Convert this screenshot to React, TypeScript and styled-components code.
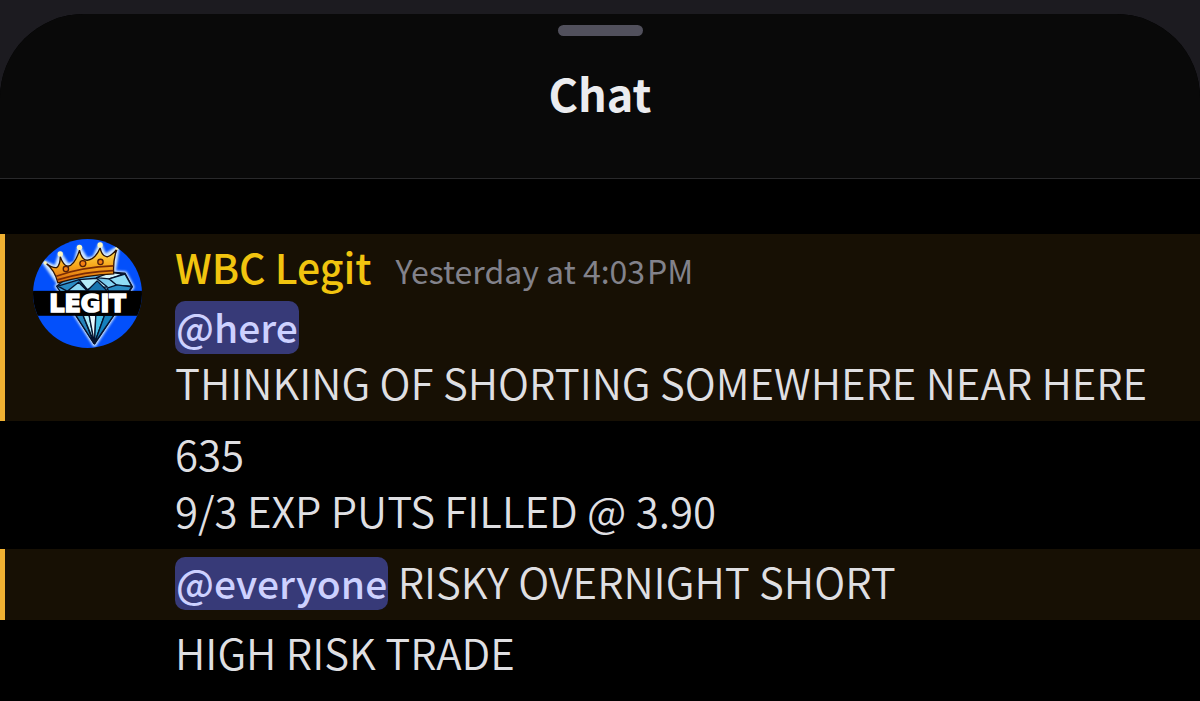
import styled, { createGlobalStyle } from 'styled-components';

const messages = [
  {
    id: 1,
    author: 'WBC Legit',
    time: 'Yesterday at 4:03\u200aPM',
    highlighted: true,
    lines: [
      { mention: '@here', text: '' },
      { mention: '', text: 'THINKING OF SHORTING SOMEWHERE NEAR HERE' },
    ],
  },
  {
    id: 2,
    highlighted: false,
    lines: [
      { mention: '', text: '635' },
      { mention: '', text: '9/3 EXP PUTS FILLED @ 3.90' },
    ],
  },
  {
    id: 3,
    highlighted: true,
    lines: [{ mention: '@everyone', text: ' RISKY OVERNIGHT SHORT' }],
  },
  {
    id: 4,
    highlighted: false,
    lines: [{ mention: '', text: 'HIGH RISK TRADE' }],
  },
];

function LegitAvatar() {
  return (
    <Avatar viewBox="99 42 328 328" role="img" aria-label="WBC Legit">
      <defs>
        <clipPath id="round">
          <circle cx="263" cy="206" r="164" />
        </clipPath>
        <linearGradient id="gold" x1="0" y1="0" x2="0" y2="1">
          <stop offset="0" stopColor="#ffe45a" />
          <stop offset="0.5" stopColor="#f8a81c" />
          <stop offset="1" stopColor="#d9660c" />
        </linearGradient>
        <linearGradient id="ice" x1="0" y1="0" x2="1" y2="1">
          <stop offset="0" stopColor="#2f8fd0" />
          <stop offset="0.5" stopColor="#8fdcf5" />
          <stop offset="1" stopColor="#2a9bd8" />
        </linearGradient>
        <filter id="glow" x="-20%" y="-20%" width="140%" height="140%">
          <feGaussianBlur stdDeviation="4" />
        </filter>
      </defs>
      <g clipPath="url(#round)">
        <rect x="99" y="42" width="328" height="328" fill="#0350fb" />
        <g
          filter="url(#glow)"
          fill="#cfe6ff"
          stroke="#cfe6ff"
          strokeWidth="12"
          strokeLinejoin="round"
        >
          <path d="M170 184 L200 160 L335 142 L376 145 L398 186 L342 272 L284 360 L228 272 Z" />
          <path d="M174 172 L133 112 L168 129 L181 88 L203 122 L227 114 L238 68 L259 104 L283 99 L301 60 L315 94 L353 70 L341 148 Z" />
        </g>
        <g stroke="#05122e" strokeWidth="4" strokeLinejoin="round">
          <path fill="url(#ice)" d="M170 184 L200 160 L335 142 L376 145 L398 186 L342 272 L284 358 L228 272 Z" />
          <path fill="#2a8cc4" d="M174 184 L238 164 L262 198 L200 198 Z" />
          <path fill="#b5ecfb" d="M238 164 L290 160 L322 186 L262 194 Z" />
          <path fill="#8ad6f2" d="M204 198 L236 172 L262 198 Z" />
          <path fill="#1874b0" d="M262 198 L292 168 L322 198 Z" />
          <path fill="#d4f5fd" d="M290 158 L335 142 L372 148 L328 162 Z" />
          <path fill="#8fdcf5" d="M328 162 L376 148 L396 184 L352 182 Z" />
          <path fill="#2a8cc4" d="M322 190 L352 180 L396 186 L388 198 L326 198 Z" />
          <path fill="#2582ba" d="M228 272 L250 272 L282 356 Z" />
          <path fill="#a8e9f8" d="M250 272 L268 272 L284 356 Z" />
          <path fill="#eafaff" d="M268 272 L288 272 L284 356 Z" />
          <path fill="#49bee6" d="M288 272 L314 272 L284 356 Z" />
          <path fill="#1480bd" d="M314 272 L342 272 L284 356 Z" />
        </g>
        <path
          fill="url(#gold)"
          stroke="#2b1203"
          strokeWidth="4"
          strokeLinejoin="round"
          d="M174 174 Q164 134 137 114 Q158 130 170 128 Q181 122 181 95 Q190 122 204 124 Q224 122 239 76 Q246 106 262 106 Q286 104 301 69 Q306 94 322 96 Q336 92 352 72 Q339 104 342 147 Q258 150 174 174 Z"
        />
        <path
          fill="none"
          stroke="#7b2b04"
          strokeWidth="5"
          d="M169 154 Q248 126 341 123 M172 165 Q254 140 341 137"
        />
        <g fill="#f57f12" stroke="#52200a" strokeWidth="4">
          <circle cx="198" cy="132" r="8" />
          <circle cx="249" cy="116" r="9" />
          <circle cx="302" cy="111" r="8" />
        </g>
        <g fill="#fff8bd">
          <circle cx="136" cy="114" r="5" />
          <circle cx="181" cy="87" r="8" />
          <circle cx="239" cy="67" r="8" />
          <circle cx="301" cy="60" r="8" />
          <circle cx="352" cy="70" r="5" />
        </g>
        <rect x="99" y="198" width="328" height="75" fill="#000" />
        <AvatarText x="263" y="261" textAnchor="middle">
          LEGIT
        </AvatarText>
      </g>
    </Avatar>
  );
}

function Message({ author, time, highlighted, lines }) {
  return (
    <MessageRow $highlighted={highlighted}>
      <AvatarColumn>{author && <LegitAvatar />}</AvatarColumn>
      <MessageBody>
        {author && (
          <MessageHead>
            <Author>{author}</Author>
            <Time>{time}</Time>
          </MessageHead>
        )}
        {lines.map((line, i) => (
          <Line key={i}>
            {line.mention && <Mention>{line.mention}</Mention>}
            {line.text}
          </Line>
        ))}
      </MessageBody>
    </MessageRow>
  );
}

function App() {
  return (
    <Page>
      <GlobalStyle />
      <Sheet>
        <Header>
          <Handle />
          <Title>Chat</Title>
        </Header>
        <MessageList>
          {messages.map(({ id, ...message }) => (
            <Message key={id} {...message} />
          ))}
        </MessageList>
      </Sheet>
    </Page>
  );
}

const GlobalStyle = createGlobalStyle`
  * {
    box-sizing: border-box;
  }
  body {
    margin: 0;
    background: #000000;
    font-family: 'Noto Sans CJK JP', 'Noto Sans', sans-serif;
  }
`;

const Page = styled.div`
  min-height: 100vh;
  padding-top: 14px;
  background: #1c1b20;
  overflow: hidden;
`;

const Sheet = styled.main`
  min-height: calc(100vh - 14px);
  background: #000000;
  border-radius: 84px 84px 0 0;
  overflow: hidden;
`;

const Header = styled.header`
  display: flex;
  flex-direction: column;
  align-items: center;
  padding: 11px 0 53px;
  background: #090909;
  border-bottom: 1px solid #29292b;
`;

const Handle = styled.div`
  width: 85px;
  height: 11px;
  border-radius: 6px;
  background: #51505c;
`;

const Title = styled.h1`
  margin: 25px 0 0;
  color: #ebecef;
  font-size: 45px;
  font-weight: 700;
  line-height: 64px;
`;

const MessageList = styled.ol`
  margin: 0;
  padding: 55px 0 0;
  list-style: none;
`;

const MessageRow = styled.li<{ $highlighted: boolean }>`
  display: flex;
  gap: 33px;
  padding: 3px 28px 11px;
  border-left: 5px solid
    ${({ $highlighted }) => ($highlighted ? '#f0b132' : 'transparent')};
  background: ${({ $highlighted }) => ($highlighted ? '#171004' : '#000000')};
`;

const AvatarColumn = styled.div`
  flex: none;
  width: 109px;
  height: 55px;
  padding-top: 2px;
`;

const Avatar = styled.svg`
  display: block;
  width: 109px;
  height: 109px;
`;

const AvatarText = styled.text`
  fill: #ffffff;
  stroke: #ffffff;
  stroke-width: 5px;
  font-family: 'DejaVu Sans', sans-serif;
  font-size: 72px;
  font-weight: 700;
`;

const MessageBody = styled.div`
  flex: 1;
  min-width: 0;
`;

const MessageHead = styled.div`
  display: flex;
  align-items: baseline;
  gap: 24px;
  height: 59px;
  line-height: 59px;
`;

const Author = styled.span`
  color: #f1c40f;
  font-size: 41px;
  font-weight: 500;
`;

const Time = styled.time`
  color: #82828b;
  font-size: 32px;
`;

const Line = styled.p`
  margin: 0;
  color: #dfdfe2;
  font-size: 42px;
  font-weight: 350;
  line-height: 57px;
  white-space: pre-wrap;
`;

const Mention = styled.span`
  display: inline-block;
  height: 53px;
  margin-bottom: -4px;
  padding: 0 1px;
  border-radius: 10px;
  background: #373a78;
  color: #cdd1ff;
  font-size: 39px;
  font-weight: 500;
  line-height: 51px;
`;

export default App;
